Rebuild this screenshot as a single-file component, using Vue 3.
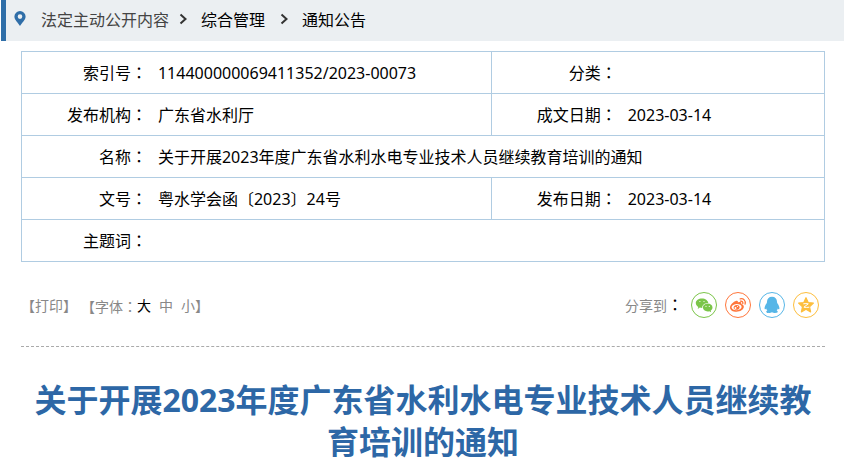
<!-- src/views/NoticeDetail.vue -->
<template>
  <div class="page">
    <nav class="crumbs" aria-label="当前位置">
      <svg class="pin" viewBox="0 0 12 15" aria-hidden="true">
        <path fill-rule="evenodd" d="M6 0a5.6 5.6 0 0 1 5.6 5.6C11.6 9 8.2 11.6 6 15 3.8 11.6.4 9 .4 5.6A5.6 5.6 0 0 1 6 0zm0 3.300a2.300 2.300 0 1 0 0 4.600 2.300 2.300 0 0 0 0-4.600z" />
      </svg>
      <template v-for="(item, i) in crumbs" :key="item">
        <svg v-if="i > 0" class="arrow" viewBox="0 0 8 12" aria-hidden="true">
          <path d="M1.500 1.500 6.500 6l-5 4.500" />
        </svg>
        <a href="#" :class="{ root: i === 0 }">{{ item }}</a>
      </template>
    </nav>

    <main class="main">
      <table class="info">
        <colgroup>
          <col class="col-label" />
          <col class="col-value" />
          <col class="col-label" />
          <col />
        </colgroup>
        <tbody>
          <tr v-for="(row, i) in rows" :key="i">
            <template v-for="cell in row" :key="cell.label">
              <th scope="row">{{ cell.label }}<span class="colon">：</span></th>
              <td :colspan="row.length === 1 ? 3 : 1">{{ cell.value }}</td>
            </template>
          </tr>
        </tbody>
      </table>

      <div class="tools">
        <div class="left">
          <span>【<button type="button" @click="print">打印</button>】</span>
          <span class="sizes">
            <span>【字体<span class="colon">：</span></span>
            <button
              v-for="s in sizes"
              :key="s"
              type="button"
              :class="{ active: s === size }"
              @click="size = s"
            >{{ s }}</button>
            <span>】</span>
          </span>
        </div>
        <div class="share">
          <span class="share-label">分享到<span class="colon dark">：</span></span>
          <a href="#" class="wechat" aria-label="微信">
            <svg viewBox="0 0 18 18">
              <path fill-rule="evenodd" d="M7 2.500c3.300 0 5.900 1.900 6.300 4.400-3.500-.2-6.300 2-6.100 5-.9 0-1.600-.1-2.300-.3l-2.200 1.300.6-2C1.900 10 .8 8.600.8 6.900.8 4.500 3.500 2.500 7 2.500zM4.900 4.900a.6.600 0 1 0 0 1.200.6.600 0 0 0 0-1.200zm4.100 0a.6.600 0 1 0 0 1.200.6.600 0 0 0 0-1.200z" />
              <path fill-rule="evenodd" d="M12.700 7.600c2.700 0 4.800 1.700 4.800 3.900 0 1.300-.7 2.400-1.800 3.100l.4 1.600-1.800-1c-.5.100-1 .2-1.600.2-2.700 0-4.800-1.700-4.800-3.900s2.100-3.900 4.800-3.900zM11 9.700a.6.600 0 1 0 0 1.200.6.600 0 0 0 0-1.200zm3.300 0a.6.600 0 1 0 0 1.200.6.600 0 0 0 0-1.200z" />
            </svg>
          </a>
          <a href="#" class="weibo" aria-label="微博">
            <svg viewBox="0 0 18 18">
              <path fill-rule="evenodd" d="M7.300 4.800c1.300-.5 2 .3 1.500 1.800 2.200-.9 4-.6 3.500 1.400 1.800.5 2.700 1.500 2.500 3-.3 2.700-3.500 4.700-7.300 4.700C3.800 15.700 1 14 1 11.400 1 9 4.300 5.800 7.300 4.800zM7.300 8.100c-2.800.2-4.900 1.700-4.700 3.500.2 1.700 2.500 2.800 5.300 2.600 2.800-.2 4.900-1.800 4.700-3.500-.2-1.700-2.500-2.800-5.300-2.600z" />
              <path fill-rule="evenodd" d="M7.500 8.900c1.900-.2 3.300.9 3.100 2.500-.2 1.500-1.700 2.500-3.400 2.400-1.700-.1-2.800-1.200-2.600-2.600.2-1.200 1.400-2.200 2.900-2.300zM6.500 10.900a1 1 0 1 0 0 2 1 1 0 0 0 0-2zm2-1a.6.600 0 1 0 0 1.200.6.600 0 0 0 0-1.200z" />
              <path class="wave" d="M11.200 2.800c3.300-.7 5.800 1.900 4.900 5.300M11.500 5.200c1.600-.3 2.700.9 2.300 2.400" />
            </svg>
          </a>
          <a href="#" class="qq" aria-label="QQ">
            <svg viewBox="0 0 18 18">
              <path d="M9 .8c3.100 0 5 2 5 5 0 .8.200 1.300.5 1.800 1.300 1.700 2.100 3.700 1.900 5.100-.1.900-.8.900-1.600-.3-.2.800-.6 1.500-1.200 2.100.8.400 1.200.8 1.200 1.300 0 1.400-4.200 1.600-5.800.4-1.600 1.200-5.800 1-5.800-.4 0-.5.400-.9 1.200-1.300-.6-.6-1-1.300-1.200-2.100-.8 1.200-1.500 1.200-1.600.3-.2-1.400.6-3.400 1.900-5.100.3-.5.500-1 .5-1.800 0-3 1.900-5 5-5z" />
            </svg>
          </a>
          <a href="#" class="qzone" aria-label="QQ空间">
            <svg viewBox="0 0 18 18">
              <path class="star" d="M9 1.700 11.200 6.500l5.200.6-3.900 3.600 1.100 5.200L9 13.300l-4.600 2.600 1.100-5.200L1.600 7.100l5.200-.6z" />
              <path class="zed" d="M6.300 7.800c1.800-.3 3.500-.3 5 0L6.900 11.200c1.700.3 3.400.3 5.400 0" />
            </svg>
          </a>
        </div>
      </div>

      <h1>关于开展2023年度广东省水利水电专业技术人员继续教育培训的通知</h1>
    </main>
  </div>
</template>

<script setup>
import { ref } from 'vue'

const crumbs = ['法定主动公开内容', '综合管理', '通知公告']

const rows = [
  [
    { label: '索引号', value: '114400000069411352/2023-00073' },
    { label: '分类', value: '' }
  ],
  [
    { label: '发布机构', value: '广东省水利厅' },
    { label: '成文日期', value: '2023-03-14' }
  ],
  [{ label: '名称', value: '关于开展2023年度广东省水利水电专业技术人员继续教育培训的通知' }],
  [
    { label: '文号', value: '粤水学会函〔2023〕24号' },
    { label: '发布日期', value: '2023-03-14' }
  ],
  [{ label: '主题词', value: '' }]
]

const sizes = ['大', '中', '小']
const size = ref('大')

const print = () => window.print()
</script>

<style>
body {
  margin: 0;
  background: #fff;
}
</style>

<style scoped>
.page {
  font-family: 'Noto Sans', 'Noto Sans CJK SC', sans-serif;
  font-size: 16px;
  color: #000;
}

a {
  color: inherit;
  text-decoration: none;
}

.colon {
  font-family: 'Noto Sans CJK TC', sans-serif;
}

/* Breadcrumb */
.crumbs {
  display: flex;
  align-items: center;
  height: 41px;
  margin-left: 1px;
  padding-left: 8px;
  border-left: 5px solid #2f6ea8;
  background: #ebeff2;
  box-sizing: border-box;
  line-height: 24px;
}

.crumbs a {
  margin-bottom: 2px;
}

.crumbs .root {
  color: #444;
}

.pin {
  width: 12px;
  height: 15px;
  margin-right: 15px;
  margin-bottom: 4px;
  fill: #2f6ea8;
}

.arrow {
  width: 8px;
  height: 12px;
  margin: 0 14px 4px 15px;
  fill: none;
  stroke: #333;
  stroke-width: 2;
}

.root + .arrow {
  margin-left: 10px;
}

.main {
  padding: 10px 19px 0 21px;
}

/* Info table */
.info {
  width: 100%;
  table-layout: fixed;
  border-collapse: collapse;
  border: 1px solid #b0cce2;
}

.col-label {
  width: 16%;
}

.col-value {
  width: 42.5%;
}

.info tr {
  border-bottom: 1px solid #b0cce2;
}

.info th,
.info td {
  height: 41px;
  padding: 0;
  line-height: 24px;
  font-weight: normal;
}

.info th {
  padding-right: 3px;
  text-align: right;
}

.info td {
  padding-left: 8px;
  border-right: 1px solid #b0cce2;
}

/* Tools */
.tools {
  display: flex;
  justify-content: space-between;
  align-items: center;
  height: 82px;
  padding-top: 2px;
  border-bottom: 1px dashed #aaa;
  font-size: 14px;
  line-height: 24px;
  color: #888;
}

.left,
.sizes,
.share {
  display: flex;
  align-items: center;
}

.left {
  gap: 4px;
  padding-top: 2px;
}

.tools button {
  padding: 0;
  border: 0;
  background: none;
  font: inherit;
  color: inherit;
  cursor: pointer;
}

.sizes button + button {
  margin-left: 8px;
}

.tools button.active,
.dark {
  color: #000;
}

.dark {
  font-size: 16px;
}

.share {
  gap: 8px;
  padding-right: 6px;
}

.share a {
  display: flex;
  align-items: center;
  justify-content: center;
  width: 26px;
  height: 26px;
  border: 1px solid currentColor;
  border-radius: 50%;
  box-sizing: border-box;
}

.share svg {
  width: 18px;
  height: 18px;
  fill: currentColor;
}

.share .wechat {
  color: #7bc549;
}

.share .weibo {
  color: #ff763b;
}

.share .qq {
  color: #56b6e7;
}

.share .qzone {
  color: #fdbe3d;
}

.wave {
  fill: none;
  stroke: currentColor;
  stroke-width: 1.3;
  stroke-linecap: round;
}

.star {
  stroke: currentColor;
  stroke-width: 1.2;
  stroke-linejoin: round;
}

.zed {
  fill: none;
  stroke: #fff;
  stroke-width: 1;
}

h1 {
  margin: 32px 0 0;
  font-size: 32px;
  line-height: 42px;
  font-weight: bold;
  text-align: center;
  color: #2d67a6;
}
</style>
